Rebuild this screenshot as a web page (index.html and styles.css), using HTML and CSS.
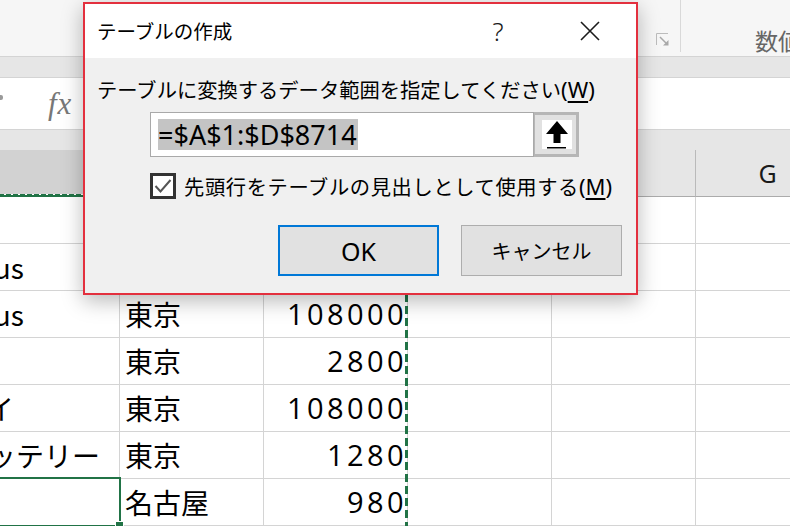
FILE: index.html
```html
<!DOCTYPE html>
<html lang="ja">
<head>
    <meta charset="UTF-8">
    <meta name="viewport" content="width=device-width, initial-scale=1.0">
    <title>テーブルの作成</title>
    <link rel="stylesheet" href="styles.css">
</head>
<body>
    <div class="app">
        <div class="ribbon">
            <div class="ribbon-group">
                <span class="launcher">
                    <svg width="14" height="14" viewBox="0 0 14 14">
                        <path d="M0.5 12 V0.5 H12" fill="none" stroke="#bcbcbc" stroke-width="1"/>
                        <path d="M4 4 L10 10" stroke="#a8a8a8" stroke-width="1.5"/>
                        <polygon points="12.5,7 12.5,12.5 7,12.5" fill="#a8a8a8"/>
                    </svg>
                </span>
            </div>
            <div class="ribbon-group next">
                <span class="group-label">数値</span>
            </div>
        </div>
        <div class="strip"></div>
        <div class="formula-bar">
            <span class="namebox-tail"></span>
            <span class="fx">fx</span>
        </div>
        <div class="strip"></div>

        <div class="sheet">
            <div class="row header">
                <div class="cell hd sel">B</div>
                <div class="cell hd sel">C</div>
                <div class="cell hd sel">D</div>
                <div class="cell hd">E</div>
                <div class="cell hd">F</div>
                <div class="cell hd">G</div>
            </div>
            <div class="rows">
                <div class="row">
                    <div class="cell">商品名</div>
                    <div class="cell">地域</div>
                    <div class="cell">価格</div>
                    <div class="cell"></div><div class="cell"></div><div class="cell"></div>
                </div>
                <div class="row">
                    <div class="cell">iPhone 8 Plus</div>
                    <div class="cell">東京</div>
                    <div class="cell num">108000</div>
                    <div class="cell"></div><div class="cell"></div><div class="cell"></div>
                </div>
                <div class="row">
                    <div class="cell">iPhone 7 Plus</div>
                    <div class="cell">東京</div>
                    <div class="cell num">108000</div>
                    <div class="cell"></div><div class="cell"></div><div class="cell"></div>
                </div>
                <div class="row">
                    <div class="cell">ケース</div>
                    <div class="cell">東京</div>
                    <div class="cell num">2800</div>
                    <div class="cell"></div><div class="cell"></div><div class="cell"></div>
                </div>
                <div class="row">
                    <div class="cell">ディスプレイ</div>
                    <div class="cell">東京</div>
                    <div class="cell num">108000</div>
                    <div class="cell"></div><div class="cell"></div><div class="cell"></div>
                </div>
                <div class="row">
                    <div class="cell">モバイルバッテリー</div>
                    <div class="cell">東京</div>
                    <div class="cell num">1280</div>
                    <div class="cell"></div><div class="cell"></div><div class="cell"></div>
                </div>
                <div class="row">
                    <div class="cell active"></div>
                    <div class="cell">名古屋</div>
                    <div class="cell num">980</div>
                    <div class="cell"></div><div class="cell"></div><div class="cell"></div>
                </div>
                <div class="copy-range"></div>
            </div>
        </div>

        <div class="dialog">
            <div class="dialog-title">
                <span class="title-text">テーブルの作成</span>
                <span class="title-btn help">?</span>
                <span class="title-btn close">
                    <svg width="20" height="20" viewBox="0 0 20 20">
                        <path d="M1 1 L19 19 M19 1 L1 19" stroke="#1b1b1b" stroke-width="1.6"/>
                    </svg>
                </span>
            </div>
            <div class="dialog-body">
                <div class="prompt">テーブルに変換するデータ範囲を指定してください<span class="latin">(<u>W</u>)</span></div>
                <div class="range-row">
                    <div class="range-input"><span class="selected-text">=$A$1:$D$8714</span></div>
                    <div class="collapse-btn">
                        <span class="collapse-face">
                            <svg width="30" height="29" viewBox="0 0 30 29">
                                <polygon points="15,1 26,14 18.5,14 18.5,23 11.5,23 11.5,14 4,14" fill="#000"/>
                                <rect x="5" y="27" width="19" height="1.5" fill="#000"/>
                            </svg>
                        </span>
                    </div>
                </div>
                <div class="check-row">
                    <span class="checkbox">
                        <svg width="20" height="20" viewBox="0 0 20 20">
                            <path d="M2.5 10 L7.5 15.5 L17.5 4" fill="none" stroke="#555" stroke-width="2"/>
                        </svg>
                    </span>
                    <span class="check-label">先頭行をテーブルの見出しとして使用する<span class="latin">(<u>M</u>)</span></span>
                </div>
                <div class="button-row">
                    <button class="btn default">OK</button>
                    <button class="btn">キャンセル</button>
                </div>
            </div>
        </div>
    </div>
</body>
</html>
```

FILE: styles.css
```css
body {
    margin: 0;
    background-color: #ffffff;
    font-family: "Noto Sans CJK JP", "Noto Sans", sans-serif;
    color: #000;
}

.app {
    position: relative;
    width: 790px;
    height: 526px;
    overflow: hidden;
}

/* ribbon + formula bar */
.ribbon {
    display: flex;
    height: 56px;
    background-color: #f6f6f6;
    border-bottom: 1px solid #d4d4d4;
}

.ribbon-group {
    flex-shrink: 0;
    width: 680px;
    height: 52px;
    border-right: 1px solid #d9d9d9;
    display: flex;
    justify-content: flex-end;
    align-items: flex-end;
}

.launcher {
    display: flex;
    margin: 0 10px 5px 0;
}

.ribbon-group.next {
    width: auto;
    border-right: none;
    justify-content: flex-start;
    align-items: center;
    padding: 14px 0 0 74px;
}

.group-label {
    font-size: 23px;
    line-height: 28px;
    color: #666;
    white-space: nowrap;
}

.strip {
    height: 20px;
    background-color: #e6e6e6;
}

.formula-bar {
    height: 51px;
    background-color: #fff;
    border-top: 1px solid #d4d4d4;
    border-bottom: 1px solid #d4d4d4;
    display: flex;
    align-items: center;
}

.namebox-tail {
    width: 3px;
    height: 5px;
    margin-bottom: 12px;
    background-color: #9a9a9a;
    border-radius: 0 2px 2px 0;
}

.fx {
    margin-left: 45px;
    font-family: "Liberation Serif", serif;
    font-style: italic;
    font-size: 31px;
    color: #777;
    letter-spacing: 1px;
}

/* sheet */
.sheet {
    background-color: #e6e6e6;
}

.row {
    display: grid;
    grid-template-columns: 277px repeat(5, 144px);
    margin-left: -157px;
}

.rows {
    position: relative;
    background-color: #fff;
}

.cell {
    height: 46px;
    border-right: 1px solid #d4d4d4;
    border-bottom: 1px solid #d4d4d4;
    display: flex;
    align-items: center;
    padding: 0 5px;
    font-size: 28px;
    line-height: 30px;
    white-space: nowrap;
    overflow: hidden;
    position: relative;
}

.cell.num {
    justify-content: flex-end;
    padding-right: 0;
    font-family: "Open Sans", sans-serif;
    font-size: 29px;
    letter-spacing: 3.4px;
}

.header .cell {
    background-color: #e6e6e6;
    border-right-color: #bababa;
    border-bottom-color: #ababab;
    justify-content: center;
    font-family: "Noto Sans", sans-serif;
    font-size: 25px;
    color: #1a1a1a;
}

.header .cell.sel {
    background-color: #d2d2d2;
    border-right-color: #9c9c9c;
}

.cell.active {
    overflow: visible;
}

.cell.active::after {
    content: "";
    position: absolute;
    left: -2px;
    top: -2px;
    right: -2px;
    bottom: -2px;
    border: 2px solid #217346;
}

.cell.active::before {
    content: "";
    position: absolute;
    right: -5px;
    bottom: -5px;
    width: 7px;
    height: 7px;
    background-color: #217346;
    border: 1px solid #fff;
    z-index: 1;
}

.copy-range {
    position: absolute;
    left: -10px;
    top: -3px;
    width: 418px;
    bottom: -20px;
    pointer-events: none;
    background:
        repeating-linear-gradient(to right, #fff 0 2px, transparent 2px 7px) left top / 100% 1px no-repeat,
        linear-gradient(#217346, #217346) left top / 100% 3px no-repeat,
        repeating-linear-gradient(to bottom, #217346 0 8px, transparent 8px 12px) right 0 top 4px / 3px 100% no-repeat;
}

/* dialog */
.dialog {
    position: absolute;
    left: 83px;
    top: 2px;
    width: 555px;
    height: 293px;
    box-sizing: border-box;
    border: 2px solid #e3303e;
    background-color: #f0f0f0;
    box-shadow: 0 6px 20px rgba(0, 0, 0, 0.28);
    display: flex;
    flex-direction: column;
}

.dialog-title {
    height: 54px;
    background-color: #fff;
    display: flex;
    align-items: center;
    flex-shrink: 0;
}

.title-text {
    flex: 1;
    padding-left: 12px;
    font-size: 19.5px;
    line-height: 24px;
    color: #000;
}

.title-btn {
    display: flex;
    justify-content: center;
    align-items: center;
    height: 54px;
}

.help {
    width: 46px;
    margin-right: 23px;
    font-family: "Noto Sans", sans-serif;
    font-size: 26px;
    font-weight: 300;
    color: #1b1b1b;
}

.close {
    width: 92px;
}

.dialog-body {
    flex: 1;
    padding: 19px 14px 0 12px;
    font-size: 20.3px;
    line-height: 24px;
}

.prompt {
    white-space: nowrap;
}

.latin {
    font-family: "Noto Sans", sans-serif;
    font-size: 22px;
    letter-spacing: 0;
}

u {
    text-decoration-thickness: 1.5px;
    text-underline-offset: 3px;
}

.range-row {
    display: flex;
    margin: 11px 0 0 53px;
}

.range-input {
    width: 384px;
    height: 45px;
    box-sizing: border-box;
    border: 1px solid #a9a9a9;
    background-color: #fff;
    display: flex;
    align-items: center;
    padding-left: 7px;
}

.selected-text {
    background-color: #c4c4c4;
    font-family: "Noto Sans", sans-serif;
    font-size: 27px;
    line-height: 31px;
    padding-right: 1px;
}

.collapse-btn {
    width: 45px;
    height: 45px;
    box-sizing: border-box;
    border: 3px solid #b6b6b6;
    border-left-width: 1px;
    background-color: #e1e1e1;
    display: flex;
    justify-content: center;
    align-items: center;
}

.collapse-face {
    display: flex;
    background-color: #fff;
    margin-left: 2px;
}

.check-row {
    display: flex;
    align-items: center;
    margin: 16px 0 0 53px;
}

.checkbox {
    width: 26px;
    height: 26px;
    box-sizing: border-box;
    border: 3px solid #333;
    background-color: #fff;
    display: flex;
    justify-content: center;
    align-items: center;
}

.check-label {
    margin-left: 8px;
    white-space: nowrap;
    letter-spacing: 0.6px;
}

.button-row {
    display: flex;
    justify-content: flex-end;
    gap: 22px;
    margin-top: 26px;
}

.btn {
    width: 161px;
    height: 51px;
    box-sizing: border-box;
    background-color: #e1e1e1;
    border: 1px solid #adadad;
    font-family: "Noto Sans CJK JP", sans-serif;
    font-size: 20px;
    color: #000;
    padding: 0;
}

.btn.default {
    border: 2px solid #0078d7;
    font-family: "Noto Sans", sans-serif;
    font-size: 25px;
}
```
